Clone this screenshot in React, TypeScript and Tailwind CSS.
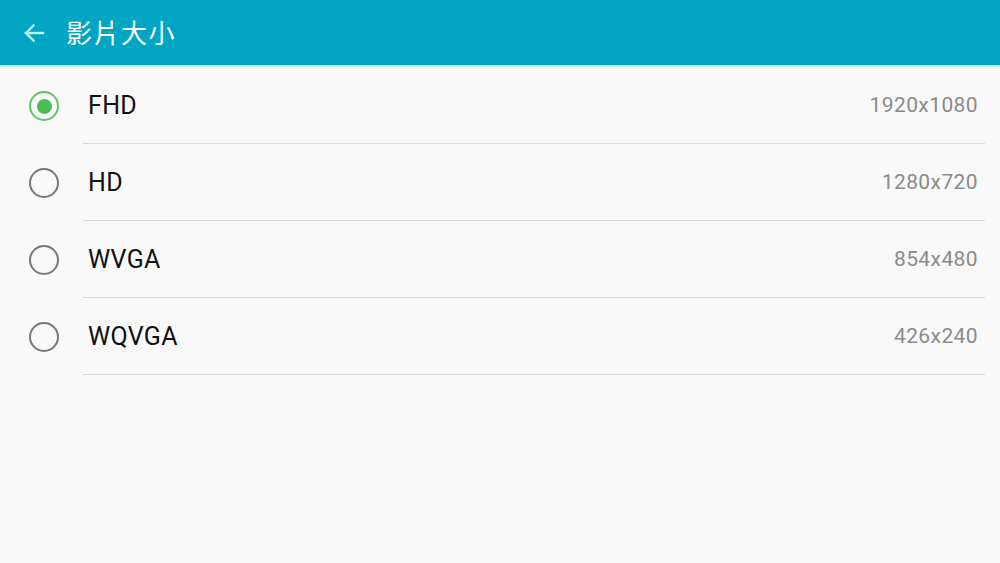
import React, { useState } from 'react';

const options = [
  { label: 'FHD', size: '1920x1080' },
  { label: 'HD', size: '1280x720' },
  { label: 'WVGA', size: '854x480' },
  { label: 'WQVGA', size: '426x240' },
];

const Radio = ({ checked }: { checked: boolean }) => (
  <div
    className={
      checked
        ? 'w-[30px] h-[30px] rounded-full border-[2.5px] border-[#5fc463] flex items-center justify-center'
        : 'w-[30px] h-[30px] rounded-full border-[2.5px] border-[#777777] flex items-center justify-center'
    }
  >
    {checked && <div className="w-[15px] h-[15px] rounded-full bg-[#4dbb55]" />}
  </div>
);

export default function App() {
  const [selected, setSelected] = useState(0);

  return (
    <div className="w-[1000px] h-[563px] bg-[#f9f9f9] flex flex-col overflow-hidden font-['Roboto','Noto_Sans_CJK_TC',sans-serif]">
      {/* Header */}
      <div className="h-[67px] bg-[#00a5c4] border-b-2 border-[#cdeef4] flex items-center">
        <button className="w-[66px] h-full flex items-center justify-center pl-[2px]">
          <svg width="24" height="24" viewBox="0 0 24 24" fill="none" stroke="#b8f4f2" strokeWidth="2.4" strokeLinecap="square">
            <path d="M21 12H4" />
            <path d="M11.5 4.5L4 12l7.5 7.5" />
          </svg>
        </button>
        <h1 className="text-white text-[26px] tracking-[1.5px] font-['Noto_Sans_CJK_TC',sans-serif] leading-none mb-[1px]">影片大小</h1>
      </div>

      {/* Options */}
      <div className="flex flex-col">
        {options.map((opt, idx) => (
          <div
            key={opt.label}
            onClick={() => setSelected(idx)}
            className="h-[77px] flex items-stretch cursor-pointer"
          >
            <div className="w-[83px] flex items-center pl-[29px] pt-[1px]">
              <Radio checked={selected === idx} />
            </div>
            <div className="flex-1 mr-[15px] border-b border-[#d9d9d9] flex items-center justify-between pl-[5px] pr-[7px] pt-[2px]">
              <span className="text-[25px] tracking-[0.35px] text-[#111111]">{opt.label}</span>
              <span className="text-[21px] tracking-[0.4px] text-[#8a8a8a]">{opt.size}</span>
            </div>
          </div>
        ))}
      </div>
    </div>
  );
}
